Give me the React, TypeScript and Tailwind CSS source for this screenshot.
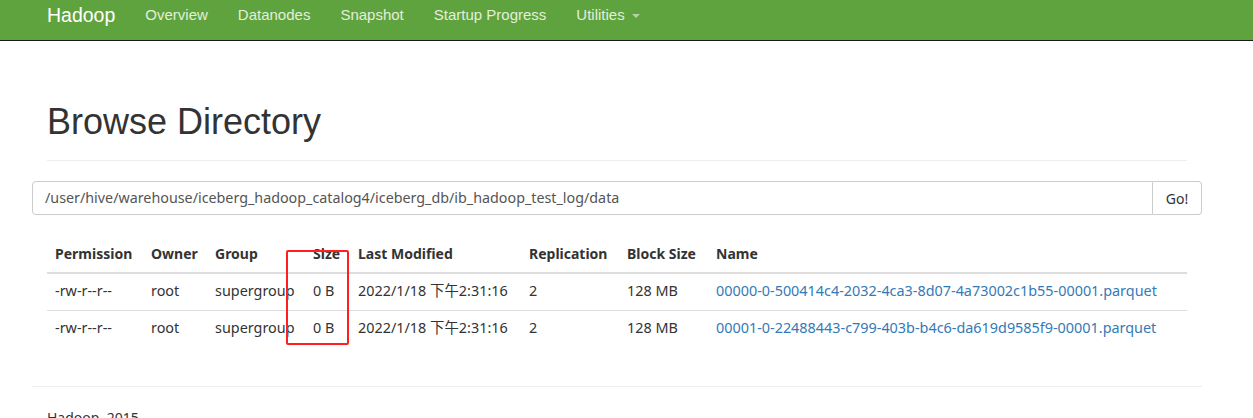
import React from "react";

const rows = [
  {
    perm: "-rw-r--r--",
    owner: "root",
    group: "supergroup",
    size: "0 B",
    mod: "2022/1/18 下午2:31:16",
    rep: "2",
    block: "128 MB",
    name: "00000-0-500414c4-2032-4ca3-8d07-4a73002c1b55-00001.parquet",
  },
  {
    perm: "-rw-r--r--",
    owner: "root",
    group: "supergroup",
    size: "0 B",
    mod: "2022/1/18 下午2:31:16",
    rep: "2",
    block: "128 MB",
    name: "00001-0-22488443-c799-403b-b4c6-da619d9585f9-00001.parquet",
  },
];

const cols = [
  { label: "Permission", w: "w-[96px]" },
  { label: "Owner", w: "w-[64px]" },
  { label: "Group", w: "w-[98px]" },
  { label: "Size", w: "w-[45px]" },
  { label: "Last Modified", w: "w-[171px]" },
  { label: "Replication", w: "w-[98px]" },
  { label: "Block Size", w: "w-[89px]" },
  { label: "Name", w: "w-auto" },
];

export default function App() {
  const tableFont = {
    fontFamily: '"Noto Sans", "Noto Sans CJK SC", sans-serif',
  };
  const td = "px-[8px] pt-[7px] pb-[9px] leading-[20px] text-[14.4px]";
  return (
    <div
      className="relative w-[1253px] h-[418px] overflow-hidden bg-white text-[#333] text-[14px]"
      style={{ fontFamily: '"Liberation Sans", Arial, sans-serif' }}
    >
      {/* navbar */}
      <div className="h-[41px] bg-[#5fa33e] border-b border-[#1a1a1a]">
        <div className="ml-[32px] w-[1170px] flex items-start pt-[4px] h-[40px]">
          <span className="px-[15px] text-[19.5px] text-white leading-[22px]">Hadoop</span>
          {["Overview", "Datanodes", "Snapshot", "Startup Progress"].map((l) => (
            <span key={l} className="px-[15px] text-[15px] text-[#e3eedc] leading-[22px]">
              {l}
            </span>
          ))}
          <span className="px-[15px] text-[15px] text-[#e3eedc] leading-[22px] flex items-center">
            Utilities
            <span className="ml-[7px] mt-[1px] w-0 h-0 border-l-[4px] border-r-[4px] border-t-[4px] border-l-transparent border-r-transparent border-t-[#b8cfae]" />
          </span>
        </div>
      </div>

      <div className="ml-[32px] w-[1170px]">
        {/* page header */}
        <div className="mx-[15px] pt-[61px] pb-[18px] border-b border-[#eee]">
          <h1 className="text-[36px] leading-[40px] text-[#333]">Browse Directory</h1>
        </div>

        {/* input group */}
        <div className="mt-[20px] flex h-[34px]">
          <div className="flex-1 border border-[#ccc] rounded-l-[4px] px-[12px] flex items-center" style={tableFont}>
            <span className="text-[14.3px] text-[#555]">
              /user/hive/warehouse/iceberg_hadoop_catalog4/iceberg_db/ib_hadoop_test_log/data
            </span>
          </div>
          <div
            className="w-[49px] border border-l-0 border-[#ccc] rounded-r-[4px] flex items-center justify-center text-[#333]"
            style={tableFont}
          >
            Go!
          </div>
        </div>

        {/* table */}
        <div className="mx-[15px] mt-[21px]" style={tableFont}>
          <table className="w-full border-collapse text-[14px]">
            <thead>
              <tr>
                {cols.map((c) => (
                  <th
                    key={c.label}
                    className={`${c.w} text-left font-bold px-[8px] py-[8px] leading-[20px] border-b-2 border-[#ddd]`}
                  >
                    {c.label}
                  </th>
                ))}
              </tr>
            </thead>
            <tbody>
              {rows.map((r, i) => {
                const b = i > 0 ? "border-t border-[#ddd]" : "";
                return (
                  <tr key={i}>
                    <td className={`${td} ${b}`}>{r.perm}</td>
                    <td className={`${td} ${b}`}>{r.owner}</td>
                    <td className={`${td} ${b}`}>{r.group}</td>
                    <td className={`${td} ${b}`}>{r.size}</td>
                    <td className={`${td} ${b}`}>{r.mod}</td>
                    <td className={`${td} ${b}`}>{r.rep}</td>
                    <td className={`${td} ${b}`}>{r.block}</td>
                    <td className={`${td} text-[#337ab7] ${b}`}>{r.name}</td>
                  </tr>
                );
              })}
            </tbody>
          </table>
        </div>

        {/* footer */}
        <div className="mt-[39px] border-t border-[#eee]">
          <p className="mx-[15px] mt-[21px] leading-[20px] text-[#333]" style={tableFont}>
            Hadoop, 2015.
          </p>
        </div>
      </div>

      {/* red annotation */}
      <div className="absolute left-[286px] top-[250px] w-[63px] h-[95px] border-2 border-[#ff1f1f] rounded-[2px]" />
    </div>
  );
}
